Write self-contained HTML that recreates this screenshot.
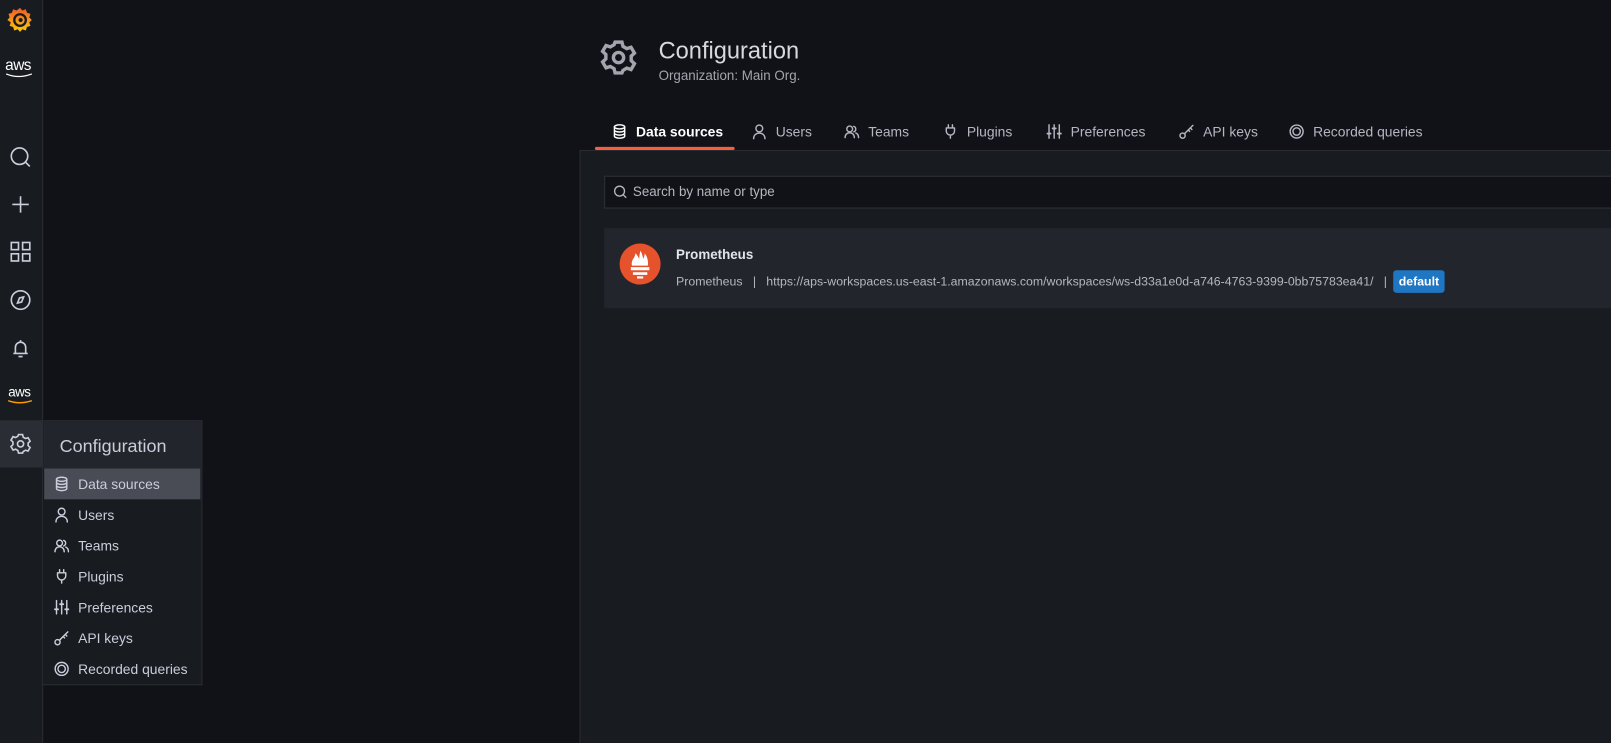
<!DOCTYPE html>
<html><head><meta charset="utf-8"><style>
*{box-sizing:border-box;margin:0;padding:0}
html,body{width:1611px;height:742px;overflow:hidden;background:#111217}
body{font-family:"Liberation Sans",sans-serif;color:#ccccdc}
#w{position:absolute;left:0;top:0;width:1568px;height:723px;transform:scale(1.02745);transform-origin:0 0}
.side{position:absolute;left:0;top:0;width:42px;height:723px;background:#181b1f;border-right:1px solid #2a2d33}
.ic{position:absolute;left:8px;width:24px;height:24px}
svg{display:block}
.panel{position:absolute;left:564px;top:146px;right:0;bottom:0;background:#181b1f;border-left:1px solid #2a2d33;border-top:1px solid #2a2d33}
.tab{position:absolute;top:118px;display:flex;align-items:center;gap:8px;height:20px;font-size:13.5px;color:#b5b6c2;white-space:nowrap}
.tab.act{color:#fff;font-weight:bold}
.menu{position:absolute;left:42px;top:409px;width:155px;height:258px;background:#181b1f;border:1px solid #2a2d33;border-left:none}
.menu .hd{height:46px;background:#22252b;font-size:17.5px;color:#ccccdc;padding:14px 0 0 16px}
.mi{height:30px;display:flex;align-items:center;gap:8px;padding-left:10px;font-size:13.5px;color:#ccccdc}
.mi.sel{background:#494c54;margin-left:1px;margin-right:1px;padding-left:9px}
.i{width:16px;height:16px;fill:none;stroke:currentColor;stroke-width:1.4;stroke-linecap:round;stroke-linejoin:round}
</style></head><body><div id="w">
<svg width="0" height="0" style="position:absolute"><defs>
<symbol id="db" viewBox="0 0 16 16"><ellipse cx="8" cy="3.5" rx="5" ry="2"/><path d="M3 3.5v9c0 1.1 2.2 2 5 2s5-.9 5-2v-9M3 6.5c0 1.1 2.2 2 5 2s5-.9 5-2M3 9.5c0 1.1 2.2 2 5 2s5-.9 5-2"/></symbol>
<symbol id="us" viewBox="0 0 16 16"><circle cx="8" cy="5" r="3.3"/><path d="M2.5 15c0-3.5 2.5-5.5 5.5-5.5s5.5 2 5.5 5.5"/></symbol>
<symbol id="tm" viewBox="0 0 16 16"><circle cx="6" cy="5.5" r="2.8"/><path d="M1.5 14c0-3 2-4.8 4.5-4.8s4.5 1.8 4.5 4.8M10 3a2.8 2.8 0 010 5.3M12 9.5c1.6.6 2.6 2.2 2.6 4.5"/></symbol>
<symbol id="pl" viewBox="0 0 16 16"><path d="M6 1.5v3M10 1.5v3M4 4.5h8v3a4 4 0 01-8 0zM8 11.5v3"/></symbol>
<symbol id="pr" viewBox="0 0 16 16"><path d="M3 1.5v13M8 1.5v13M13 1.5v13"/><path d="M1.5 10h3M6.5 5h3M11.5 10h3" stroke-width="1.8"/></symbol>
<symbol id="ky" viewBox="0 0 16 16"><circle cx="4" cy="12" r="2.5"/><path d="M5.8 10.2L14 2M11.5 4.5l1.5 1.5M9.5 6.5l1.3 1.3"/></symbol>
<symbol id="rq" viewBox="0 0 16 16"><circle cx="8" cy="8" r="6.3"/><circle cx="8" cy="8" r="3.6"/></symbol>
<symbol id="gear" viewBox="0 0 24 24"><path d="M10 3h4l.6 2.5 2.2 1.3 2.5-.8 2 3.4-1.9 1.8v2.6l1.9 1.8-2 3.4-2.5-.8-2.2 1.3L14 21h-4l-.6-2.5-2.2-1.3-2.5.8-2-3.4 1.9-1.8v-2.6L2.7 8.4l2-3.4 2.5.8 2.2-1.3z"/><circle cx="12" cy="12" r="3"/></symbol>
</defs></svg>
<div class="side">
 <svg style="position:absolute;left:6px;top:6px" width="27" height="27" viewBox="0 0 24 24"><defs><linearGradient id="g" x1="0" y1="1" x2="0" y2="0"><stop offset="0" stop-color="#fbca0a"/><stop offset="1" stop-color="#f05a28"/></linearGradient></defs><path fill="url(#g)" d="M12 1.5l2 2.2 3-1 1 3 3 1-1 3 2.2 2.3-2.2 2 1 3-3 1-1 3-3-1-2 2.2-2-2.2-3 1-1-3-3-1 1-3L1 12l2-2.3-1-3 3-1 1-3 3 1z"/><circle cx="12" cy="12" r="5" fill="none" stroke="#181b1f" stroke-width="2"/><circle cx="12.5" cy="12" r="1.8" fill="#181b1f"/></svg>
 <div style="position:absolute;left:5px;top:55px;font-size:15px;color:#fff;letter-spacing:-0.5px">aws</div>
 <svg style="position:absolute;left:5px;top:71px" width="28" height="6"><path d="M1 1q12 5 25 0" stroke="#fff" fill="none" stroke-width="1.2"/></svg>
 <svg class="ic" style="top:141px" viewBox="0 0 24 24" fill="none" stroke="#ccccdc" stroke-width="1.6"><circle cx="11" cy="11" r="8"/><path d="M17 17l4 4"/></svg>
 <svg class="ic" style="top:187px" viewBox="0 0 24 24" fill="none" stroke="#ccccdc" stroke-width="1.6"><path d="M12 4v16M4 12h16"/></svg>
 <svg class="ic" style="top:233px" viewBox="0 0 24 24" fill="none" stroke="#ccccdc" stroke-width="1.6"><rect x="3" y="3" width="7" height="7"/><rect x="14" y="3" width="7" height="7"/><rect x="3" y="14" width="7" height="7"/><rect x="14" y="14" width="7" height="7"/></svg>
 <svg class="ic" style="top:280px" viewBox="0 0 24 24" fill="none" stroke="#ccccdc" stroke-width="1.6"><circle cx="12" cy="12" r="9"/><path d="M15 9l-2 5-4 1 2-5z"/></svg>
 <svg class="ic" style="top:327px" viewBox="0 0 24 24" fill="none" stroke="#ccccdc" stroke-width="1.6"><path d="M7 17v-6a5 5 0 0110 0v6zM5 17h14M10 20h4M12 4v2"/></svg>
 <div style="position:absolute;left:8px;top:374px;font-size:13px;color:#fff;letter-spacing:-0.5px">aws</div>
 <svg style="position:absolute;left:7px;top:389px" width="26" height="5"><path d="M1 1q11 4 23 0" stroke="#f90" fill="none" stroke-width="1.5"/></svg>
 <div style="position:absolute;left:0;top:409px;width:42px;height:46px;background:#2a2d33"></div>
 <svg class="ic" style="top:420px" viewBox="0 0 24 24" fill="none" stroke="#ccccdc" stroke-width="1.6"><use href="#gear"/></svg>
</div>

<svg style="position:absolute;left:582px;top:36px" width="40" height="40" viewBox="0 0 24 24" fill="none" stroke="#a3a4ad" stroke-width="2"><use href="#gear"/></svg>
<div style="position:absolute;left:641px;top:36px;font-size:23px;color:#d8d9e0">Configuration</div>
<div style="position:absolute;left:641px;top:66px;font-size:13px;color:#a3a4ad">Organization: Main Org.</div>

<div class="tab act" style="left:595px"><svg class="i"><use href="#db"/></svg>Data sources</div>
<div class="tab" style="left:731px"><svg class="i"><use href="#us"/></svg>Users</div>
<div class="tab" style="left:821px"><svg class="i"><use href="#tm"/></svg>Teams</div>
<div class="tab" style="left:917px"><svg class="i"><use href="#pl"/></svg>Plugins</div>
<div class="tab" style="left:1018px"><svg class="i"><use href="#pr"/></svg>Preferences</div>
<div class="tab" style="left:1147px"><svg class="i"><use href="#ky"/></svg>API keys</div>
<div class="tab" style="left:1254px"><svg class="i"><use href="#rq"/></svg>Recorded queries</div>
<div style="position:absolute;left:579px;top:143px;width:136px;height:3px;background:#f55f3e;border-radius:2px"></div>

<div class="panel"></div>
<div style="position:absolute;left:588px;top:171px;right:0;height:32px;background:#111217;border:1px solid #2f3238;border-right:none"></div>
<svg style="position:absolute;left:597px;top:180px" width="14" height="14" viewBox="0 0 14 14" fill="none" stroke="#b5b6c2" stroke-width="1.3"><circle cx="6" cy="6" r="4.8"/><path d="M9.5 9.5l3 3"/></svg>
<div style="position:absolute;left:616px;top:179px;font-size:13px;color:#b5b6c2">Search by name or type</div>

<div style="position:absolute;left:588px;top:222px;right:0;height:78px;background:#22252b"></div>
<svg style="position:absolute;left:603px;top:237px" width="40" height="40" viewBox="0 0 40 40"><circle cx="20" cy="20" r="20" fill="#e6522c"/><path d="M11 23h18v3H11zM13 28h14v2.5H13zM17 32h6v2h-6zM12 21.5c-1-6 3-7 3.5-12 2 2 3 4 3.5 5.5.5-3 .5-6 1.5-8 1 2 2 5 2.5 8 1-2 1.5-4 1.5-5.5 3 4 3.5 8 3 12z" fill="#fff"/></svg>
<div style="position:absolute;left:658px;top:240px;font-size:13px;font-weight:bold;color:#e4e5ea">Prometheus</div>
<div style="position:absolute;left:658px;top:267px;font-size:12px;color:#b5b6c2;white-space:nowrap">Prometheus &nbsp;&nbsp;| &nbsp;&nbsp;https://aps-workspaces.us-east-1.amazonaws.com/workspaces/ws-d33a1e0d-a746-4763-9399-0bb75783ea41/ &nbsp;&nbsp;|</div>
<div style="position:absolute;left:1356px;top:263px;width:50px;height:22px;background:#1f77c4;border-radius:3px;color:#fff;font-size:12px;font-weight:bold;text-align:center;line-height:22px">default</div>

<div class="menu">
 <div class="hd">Configuration</div>
 <div class="mi sel"><svg class="i"><use href="#db"/></svg>Data sources</div>
 <div class="mi"><svg class="i"><use href="#us"/></svg>Users</div>
 <div class="mi"><svg class="i"><use href="#tm"/></svg>Teams</div>
 <div class="mi"><svg class="i"><use href="#pl"/></svg>Plugins</div>
 <div class="mi"><svg class="i"><use href="#pr"/></svg>Preferences</div>
 <div class="mi"><svg class="i"><use href="#ky"/></svg>API keys</div>
 <div class="mi"><svg class="i"><use href="#rq"/></svg>Recorded queries</div>
</div>
</div></body></html>
